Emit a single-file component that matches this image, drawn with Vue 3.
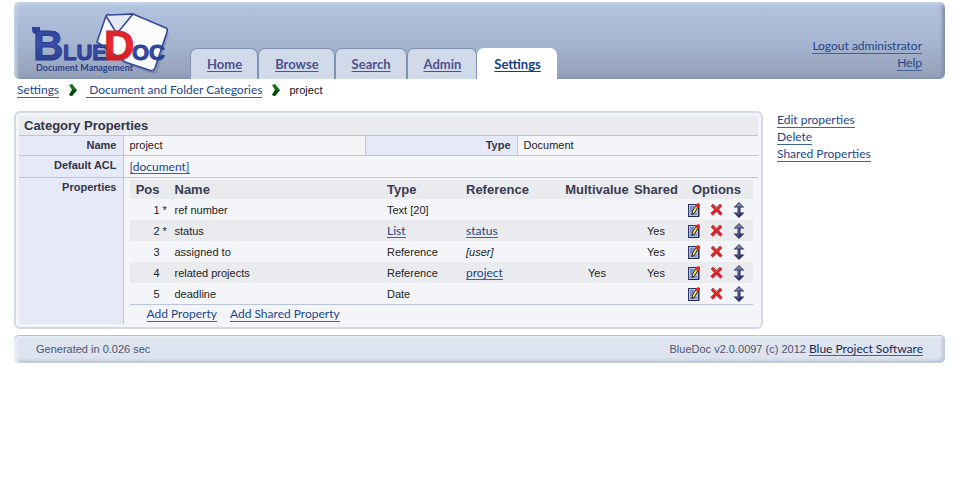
<script setup>
const tabs = ['Home', 'Browse', 'Search', 'Admin', 'Settings']
const activeTab = 'Settings'

const properties = [
  { pos: 1, required: true, name: 'ref number', type: 'Text [20]' },
  { pos: 2, required: true, name: 'status', type: 'List', typeLink: true, reference: 'status', refLink: true, shared: true },
  { pos: 3, name: 'assigned to', type: 'Reference', reference: '[user]', shared: true },
  { pos: 4, name: 'related projects', type: 'Reference', reference: 'project', refLink: true, multi: true, shared: true },
  { pos: 5, name: 'deadline', type: 'Date' },
]
</script>

<template>
  <div class="page">
    <header class="banner">
      <svg class="logo" viewBox="0 0 150 70" width="150" height="70" role="img" aria-label="BlueDoc Document Management">
        <defs>
          <linearGradient id="blueInk" x1="0" y1="0" x2="0" y2="1">
            <stop offset="0" stop-color="#2f429c" />
            <stop offset="0.5" stop-color="#3a4fa8" />
            <stop offset="1" stop-color="#25357f" />
          </linearGradient>
          <linearGradient id="redInk" x1="0" y1="0" x2="0" y2="1">
            <stop offset="0" stop-color="#c81d28" />
            <stop offset="0.5" stop-color="#f02a2c" />
            <stop offset="1" stop-color="#b01420" />
          </linearGradient>
        </defs>
        <path d="M83 9 L109 7 L143 22 L131 62 L127 63 L101 54 L73 34 Z" fill="#66738f" opacity="0.4" transform="translate(2 2)" />
        <path d="M109 5 L142 19 Q144 20 143 23 L131 59 Q129 63 125 61 L101 53 L73 33 L82 7 Z" fill="#fbfcff" stroke="#354a98" stroke-width="1.6" stroke-linejoin="round" />
        <path d="M82 7 Q83 5 86 6 L109 5 L95 22 Q92 24 90 20 Z" fill="#e4e9f5" stroke="#354a98" stroke-width="1.6" stroke-linejoin="round" />
        <path d="M8 18 H16 V25 H12 Q8 25 8 20 Z" fill="#2f429c" />
        <g class="word">
          <text class="big" x="9" y="51" fill="url(#blueInk)" stroke="#2b3d92">B</text>
          <text x="39" y="51" fill="url(#blueInk)" stroke="#2b3d92">LUE</text>
          <text x="108" y="51" fill="url(#blueInk)" stroke="#2b3d92">OC</text>
          <text class="big" x="80" y="51" fill="url(#redInk)" stroke="#d5222b">D</text>
        </g>
        <text class="tagline" x="12" y="62">Document Management</text>
      </svg>
      <nav class="tabs" aria-label="Main">
        <a v-for="tab in tabs" :key="tab" href="#" class="tab" :class="{ active: tab === activeTab }">{{ tab }}</a>
      </nav>
      <div class="account">
        <a href="#">Logout administrator</a>
        <a href="#">Help</a>
      </div>
    </header>

    <nav class="crumbs" aria-label="Breadcrumb">
      <a href="#">Settings</a>
      <svg width="9" height="12" viewBox="0 0 9 12" aria-hidden="true"><path d="M1 1 L4 0 L9 6 L4 12 L1 11 L4 6 Z" fill="#167016" /><path d="M4 6 L9 6 L4 12 L1 11 Z" fill="#07480b" /></svg>
      <a href="#">&nbsp;Document and Folder Categories</a>
      <svg width="9" height="12" viewBox="0 0 9 12" aria-hidden="true"><path d="M1 1 L4 0 L9 6 L4 12 L1 11 L4 6 Z" fill="#167016" /><path d="M4 6 L9 6 L4 12 L1 11 Z" fill="#07480b" /></svg>
      <span>project</span>
    </nav>

    <div class="content">
      <main class="panel">
        <table class="details">
          <colgroup><col class="c-label" /><col class="c-value" /><col class="c-label2" /><col /></colgroup>
          <tbody>
            <tr class="title"><th colspan="4">Category Properties</th></tr>
            <tr class="line">
              <th scope="row">Name</th><td>project</td>
              <th scope="row" class="second">Type</th><td>Document</td>
            </tr>
            <tr class="line acl">
              <th scope="row">Default ACL</th><td colspan="3"><a href="#">[document]</a></td>
            </tr>
            <tr class="line">
              <th scope="row">Properties</th>
              <td colspan="3" class="holder">
                <table class="props">
                  <colgroup>
                    <col class="p-pos" /><col class="p-star" /><col /><col class="p-type" /><col class="p-ref" />
                    <col class="p-multi" /><col class="p-shared" /><col class="p-opt" />
                  </colgroup>
                  <thead>
                    <tr>
                      <th class="right">Pos</th><th></th><th>Name</th><th>Type</th><th>Reference</th>
                      <th class="mid">Multivalue</th><th class="mid">Shared</th><th class="mid">Options</th>
                    </tr>
                  </thead>
                  <tbody>
                    <tr v-for="p in properties" :key="p.pos">
                      <td class="right">{{ p.pos }}</td>
                      <td class="star">{{ p.required ? '*' : '' }}</td>
                      <td>{{ p.name }}</td>
                      <td><a v-if="p.typeLink" href="#">{{ p.type }}</a><template v-else>{{ p.type }}</template></td>
                      <td><a v-if="p.refLink" href="#">{{ p.reference }}</a><em v-else>{{ p.reference }}</em></td>
                      <td class="mid">{{ p.multi ? 'Yes' : '' }}</td>
                      <td class="mid">{{ p.shared ? 'Yes' : '' }}</td>
                      <td>
                        <div class="options">
                          <button type="button" aria-label="Edit">
                            <svg width="12" height="14" viewBox="0 0 12 14">
                              <rect x="0.5" y="1.5" width="10" height="12" fill="#b4c0e8" stroke="#2b3566" />
                              <path d="M2 4 H6 M2 6 H5 M2 8 H4 M2 11 H9" stroke="#4a5aa0" />
                              <path d="M11 2 V13.5 H1" fill="none" stroke="#20264a" />
                              <path d="M8 2.5 L10 4 L6.5 10 L4 11.5 L4.5 8 Z" fill="#f4e64a" stroke="#111" stroke-width="0.9" />
                              <path d="M8 1.5 L10 0 L12 1 V3 L10.5 5 L7.5 3 Z" fill="#e8232a" />
                            </svg>
                          </button>
                          <button type="button" aria-label="Delete">
                            <svg width="13" height="13" viewBox="0 0 13 13">
                              <path d="M3 1 L6.5 4.4 L10 1 L12 3 L8.6 6.5 L12.3 10.5 L10.3 12.3 L6.5 8.6 L3 12.3 L0.7 10.3 L4.4 6.5 L1 3 Z" fill="#d92426" stroke="#b8242a" stroke-width="0.6" />
                              <path d="M3 2.3 L6.5 5.8 L10 2.3" fill="none" stroke="#ea5654" stroke-width="0.7" />
                            </svg>
                          </button>
                          <button type="button" aria-label="Move">
                            <svg width="12" height="16" viewBox="0 0 12 16">
                              <path d="M6 0 L11.5 5.5 H7.5 V10.5 H11.5 L6 16 L0.5 10.5 H4.5 V5.5 H0.5 Z" fill="#303260" />
                              <path d="M6 1 L9.5 4.5 H2.5 Z" fill="#8083a8" />
                              <path d="M5 5 H6 V11 H5 Z" fill="#595c88" />
                              <path d="M3 11 H7 L5.5 13.5 Z" fill="#52558a" />
                            </svg>
                          </button>
                        </div>
                      </td>
                    </tr>
                  </tbody>
                </table>
                <div class="actions"><a href="#">Add Property</a><a href="#">Add Shared Property</a></div>
              </td>
            </tr>
          </tbody>
        </table>
      </main>
      <aside class="side">
        <a href="#">Edit properties</a>
        <a href="#">Delete</a>
        <a href="#">Shared Properties</a>
      </aside>
    </div>

    <footer class="footer">
      <span>Generated in 0.026 sec</span>
      <span class="version">BlueDoc v2.0.0097 (c) 2012 <a href="#">Blue Project Software</a></span>
    </footer>
  </div>
</template>

<style>
body {
  background: #fff;
}
</style>

<style scoped>
.page {
  padding: 2px 15px 0 14px;
  font: 11px/16px "Liberation Sans", Arial, sans-serif;
  color: #222;
}
a {
  font: 12px/16px Lato, "Trebuchet MS", sans-serif;
  color: #1e4589;
  text-decoration: none;
  box-shadow: inset 0 -1px #426399;
}
.banner {
  display: flex;
  height: 77px;
  border-radius: 6px;
  background: linear-gradient(#b3c4e1, #a5b4cf 55%, #929fb8);
  box-shadow: inset 3px 3px 3px #c3cfe3, inset -3px -1px 3px #8492af;
}
.logo {
  flex: none;
  margin: 7px 0 0 10px;
}
.word {
  font: bold 22px "Liberation Sans", Arial, sans-serif;
  stroke-width: 1;
}
.big {
  font-size: 42px;
}
.tagline {
  font: bold 9px Lato, sans-serif;
  fill: #2f4184;
}
.tabs {
  display: flex;
  align-items: flex-end;
  margin-left: 16px;
}
.tab {
  box-sizing: border-box;
  height: 31px;
  padding: 7px 15px 0 16px;
  border: 1px solid #8291b0;
  border-bottom: 0;
  border-radius: 7px 7px 0 0;
  background: #d0dae9;
  box-shadow: none;
  font-size: 13px;
  font-weight: bold;
  color: #50518f;
  text-decoration: underline;
  text-underline-offset: 2px;
}
.tab.active {
  border-color: #fff;
  background: #fff;
  color: #124080;
}
.account {
  display: flex;
  flex-direction: column;
  align-items: flex-end;
  gap: 1px;
  margin: 36px 23px 0 auto;
}
.crumbs {
  display: flex;
  align-items: center;
  gap: 9px;
  height: 16px;
  margin: 3px 0 0 3px;
  color: #111;
}
.content {
  display: flex;
  gap: 14px;
  margin-top: 13px;
}
.panel {
  flex: 1;
  padding: 3px;
  border: 2px solid #d3d8e6;
  border-radius: 6px;
  background: #f3f5f9;
}
.side {
  display: flex;
  flex-direction: column;
  align-items: flex-start;
  flex: 0 0 168px;
  gap: 1px;
  padding-top: 1px;
}
table {
  width: 100%;
  border-collapse: collapse;
  table-layout: fixed;
}
th, td {
  padding: 0;
  text-align: left;
}
.c-label { width: 104px; }
.c-value { width: 242px; }
.c-label2 { width: 152px; }
.title th {
  height: 19px;
  padding-left: 5px;
  background: #eaebef;
  font-size: 13px;
  color: #343447;
}
.line > th, .line > td {
  padding: 1px 6px 2px;
  border-top: 1px solid #bac5da;
  vertical-align: top;
}
.line > th {
  border-right: 1px solid #bac5da;
  background: #e5e9f8;
  color: #343447;
  text-align: right;
}
.line > th.second {
  border-left: 1px solid #bac5da;
}
.acl > td {
  padding-top: 3px;
}
.line > td.holder {
  padding: 2px 5px 1px 6px;
}
.p-pos { width: 30px; }
.p-star { width: 15px; }
.p-type { width: 79px; }
.p-ref { width: 96px; }
.p-multi { width: 70px; }
.p-shared { width: 48px; }
.p-opt { width: 73px; }
.props {
  border-bottom: 1px solid #bac5da;
}
.props th {
  height: 19px;
  background: #eaebef;
  font-size: 13px;
  color: #3a3b50;
}
.props td {
  height: 21px;
}
.props tbody tr:nth-child(even) {
  background: #eaebef;
}
.props .right { text-align: right; }
.props .mid { text-align: center; }
.props .star { padding-left: 3px; }
.options {
  display: flex;
  align-items: center;
  justify-content: center;
  gap: 10px;
}
.options button {
  display: flex;
  padding: 0;
  border: 0;
  background: none;
}
.actions {
  display: flex;
  gap: 13px;
  padding: 1px 17px;
}
.footer {
  display: flex;
  align-items: center;
  justify-content: space-between;
  height: 28px;
  margin-top: 6px;
  padding: 0 22px;
  border-radius: 5px;
  background: #dde4ef;
  box-shadow: inset 0 1px #b5c0d5, inset 3px 2px 3px #edf2f8, inset -3px -3px 3px #c0cadc;
  color: #50546e;
}
.footer a {
  color: #202b54;
}
</style>
